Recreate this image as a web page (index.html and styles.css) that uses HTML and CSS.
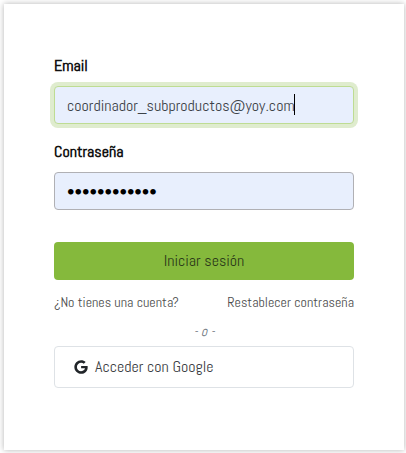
FILE: index.html
```html
<!DOCTYPE html>
<html lang="es">
<head>
    <meta charset="UTF-8">
    <meta name="viewport" content="width=device-width, initial-scale=1.0">
    <title>Iniciar sesión</title>
    <link rel="stylesheet" href="styles.css">
</head>
<body>
    <main class="card">
        <form class="login-form">
            <div class="form-group">
                <label for="email">Email</label>
                <div class="field">
                    <input class="form-control focused" type="email" id="email" name="email" value="coordinador_subproductos@yoy.com">
                    <span class="caret"></span>
                </div>
            </div>
            <div class="form-group">
                <label for="password">Contraseña</label>
                <input class="form-control" type="password" id="password" name="password" value="coordinador1">
            </div>
            <button class="btn btn-primary" type="submit">Iniciar sesión</button>
        </form>
        <div class="links">
            <a href="#">¿No tienes una cuenta?</a>
            <a href="#">Restablecer contraseña</a>
        </div>
        <p class="separator">- o -</p>
        <button class="btn btn-google" type="button">
            <svg class="google-icon" viewBox="0 0 488 512" aria-hidden="true">
                <path fill="currentColor" d="M488 261.8C488 403.3 391.1 504 248 504 110.8 504 0 393.2 0 256S110.8 8 248 8c66.8 0 123 24.5 166.3 64.9l-67.5 64.9C258.5 52.6 94.3 116.6 94.3 256c0 86.5 69.1 156.6 153.7 156.6 98.2 0 135-70.4 140.8-106.9H248v-85.3h236.1c2.3 12.7 3.9 24.9 3.9 41.4z"/>
            </svg>
            Acceder con Google
        </button>
    </main>
</body>
</html>
```

FILE: styles.css
```css
* {
    box-sizing: border-box;
}

body {
    margin: 0;
    padding: 4px 2px 3px 4px;
    background-color: #fff;
    color: #212529;
    font-family: Abel, "Liberation Sans Narrow", "Liberation Sans", sans-serif;
    font-size: 16px;
    line-height: 24px;
}

.card {
    padding: 50px 50px 62px;
    background-color: #fff;
    box-shadow: 0 0 6px rgba(0, 0, 0, 0.3);
}

/* Form fields */
.form-group {
    margin-bottom: 16px;
}

label {
    display: block;
    margin-bottom: 8px;
    color: #111;
    font-weight: bold;
}

.field {
    position: relative;
}

.form-control {
    display: block;
    width: 100%;
    height: 38px;
    padding: 6px 12px;
    border: 1px solid #b0b0b4;
    border-radius: 4px;
    background-color: #e8effd;
    color: #3c4248;
    font: inherit;
    outline: none;
}

.form-control[type="password"] {
    color: #000;
}

.form-control.focused {
    border-color: #bedc93;
    box-shadow: 0 0 0 4px #dfecce;
}

.caret {
    position: absolute;
    top: 8px;
    left: 240px;
    width: 1px;
    height: 21px;
    background-color: #000;
}

/* Buttons */
.btn {
    display: flex;
    align-items: center;
    width: 100%;
    border: 1px solid transparent;
    border-radius: 4px;
    font: inherit;
    cursor: pointer;
}

.btn-primary {
    justify-content: center;
    height: 38px;
    margin-top: 32px;
    background-color: #85b93c;
    color: #2c3a1a;
}

.btn-google {
    gap: 7px;
    height: 42px;
    padding: 8px 19px;
    border-color: #dee2e6;
    background-color: #fff;
    color: #3c4044;
}

.google-icon {
    width: 14px;
    height: 14px;
    color: #212529;
}

/* Links under the form */
.links {
    display: flex;
    justify-content: space-between;
    margin-top: 12px;
    font-size: 14px;
    line-height: 21px;
}

.links a {
    color: #4c4c4c;
    text-decoration: none;
}

.separator {
    margin: 8px 0 4px;
    color: #6c757d;
    font-size: 14px;
    font-style: italic;
    line-height: 21px;
    text-align: center;
}
```
